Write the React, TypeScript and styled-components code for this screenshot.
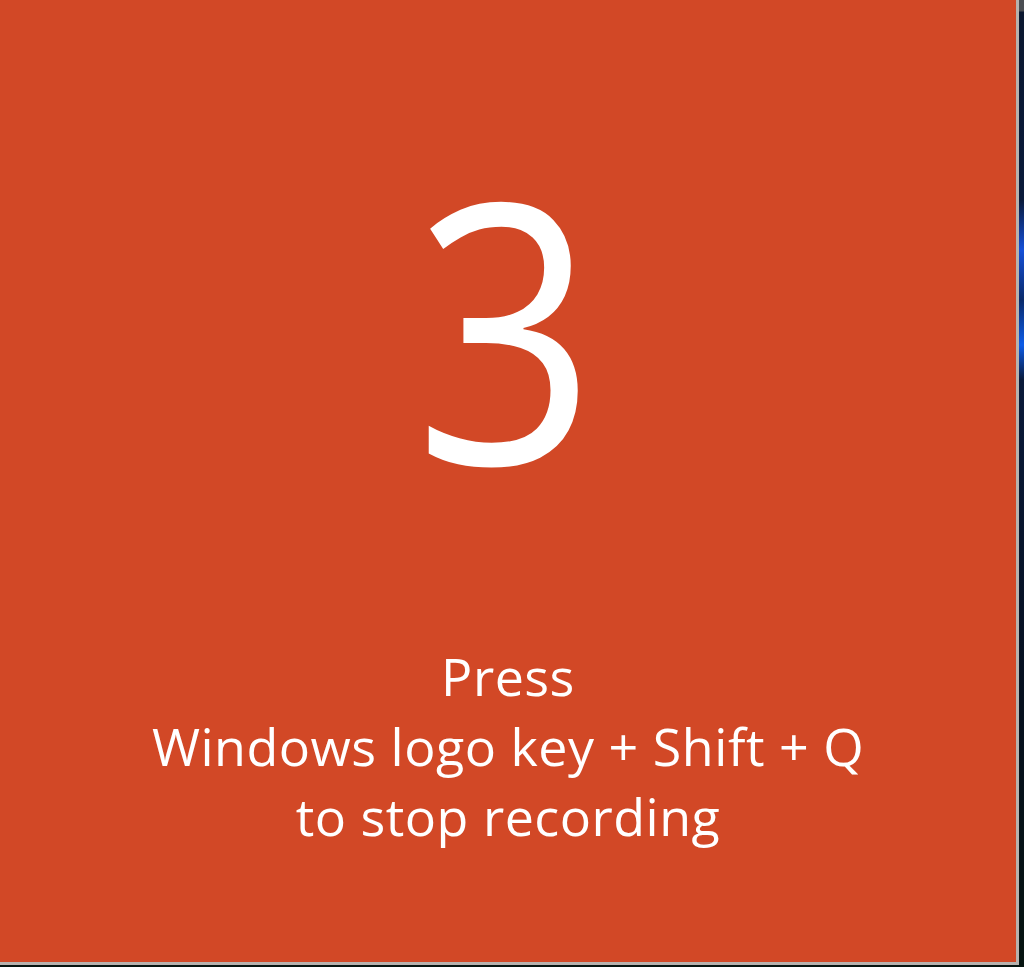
import styled, { createGlobalStyle } from 'styled-components';

const GlobalStyle = createGlobalStyle`
  html, body {
    margin: 0;
    padding: 0;
    height: 100%;
    overflow: hidden;
  }
  body {
    background: linear-gradient(
      180deg,
      #4a4d52 0px,
      #4a4d52 11px,
      #0b1830 12px,
      #0a1a3a 200px,
      #1550d8 250px,
      #0a2a6a 300px,
      #0d5ce8 345px,
      #0a1a3a 380px,
      #06101f 700px,
      #061410 967px
    );
  }
`;

const Screen = styled.div`
  width: 1024px;
  height: 967px;
  display: flex;
  align-items: flex-start;
`;

const Panel = styled.div`
  box-sizing: border-box;
  width: 1019px;
  height: 965px;
  background: #d24826;
  border-right: 3px solid #b7b2ae;
  border-bottom: 3px solid #b7b2ae;
  display: flex;
  flex-direction: column;
  align-items: center;
  color: #ffffff;
  font-family: 'Open Sans', 'Noto Sans', sans-serif;
`;

const Countdown = styled.div`
  margin-top: 124px;
  height: 400px;
  font-size: 362px;
  line-height: 400px;
  font-weight: 400;
  transform: translateX(-3px) scaleX(0.88);
`;

const Message = styled.div`
  margin-top: 117px;
  text-align: center;
  font-size: 52px;
  line-height: 70px;
  letter-spacing: 0.5px;
`;

const Line = styled.div``;

const App = () => {
  return (
    <>
      <GlobalStyle />
      <Screen>
        <Panel>
          <Countdown>3</Countdown>
          <Message>
            <Line>Press</Line>
            <Line>Windows logo key + Shift + Q</Line>
            <Line>to stop recording</Line>
          </Message>
        </Panel>
      </Screen>
    </>
  );
};

export default App;
